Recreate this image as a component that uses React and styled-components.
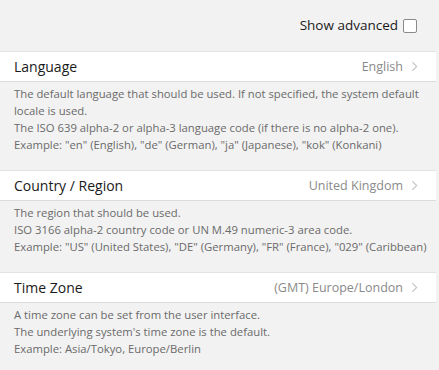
import React from 'react'
import styled, { createGlobalStyle } from 'styled-components'

const GlobalStyle = createGlobalStyle`
  html, body {
    margin: 0;
    padding: 0;
    background: #f2f2f2;
  }
  body {
    font-family: "Open Sans", "Noto Sans", sans-serif;
  }
`

const settings = [
  {
    title: 'Language',
    value: 'English',
    lines: [
      'The default language that should be used. If not specified, the system default locale is used.',
      'The ISO 639 alpha-2 or alpha-3 language code (if there is no alpha-2 one).',
      'Example: "en" (English), "de" (German), "ja" (Japanese), "kok" (Konkani)',
    ],
  },
  {
    title: 'Country / Region',
    value: 'United Kingdom',
    lines: [
      'The region that should be used.',
      'ISO 3166 alpha-2 country code or UN M.49 numeric-3 area code.',
      'Example: "US" (United States), "DE" (Germany), "FR" (France), "029" (Caribbean)',
    ],
  },
  {
    title: 'Time Zone',
    value: '(GMT) Europe/London',
    lines: [
      'A time zone can be set from the user interface.',
      "The underlying system's time zone is the default.",
      'Example: Asia/Tokyo, Europe/Berlin',
    ],
  },
]

const Page = () => {
  return (
    <Container>
      <GlobalStyle />
      <TopBar>
        <label>
          Show advanced
          <Check />
        </label>
      </TopBar>

      {settings.map((item) => (
        <Section key={item.title}>
          <Row>
            <span className='row-title'>{item.title}</span>
            <span className='row-value'>
              {item.value}
              <Chevron viewBox='0 0 8 12'>
                <path d='M1.5 1 L6.5 6 L1.5 11' />
              </Chevron>
            </span>
          </Row>
          <Desc>
            {item.lines.map((line, i) => (
              <p key={i}>{line}</p>
            ))}
          </Desc>
        </Section>
      ))}
    </Container>
  )
}

const Container = styled.div`
  width: 436px;
  min-height: 370px;
  background: #f2f2f2;
  color: #222;
`

const TopBar = styled.div`
  display: flex;
  justify-content: flex-end;
  align-items: flex-start;
  padding: 16px 19px 0 0;
  height: 35px;

  label{
    display: flex;
    align-items: center;
    font-size: 13.5px;
    line-height: 19px;
    color: #1a1a1a;
    gap: 5px;
  }
`

const Check = styled.span`
  display: inline-block;
  width: 12px;
  height: 12px;
  border: 1px solid #8a8a8a;
  border-radius: 2px;
  background: #fff;
`

const Section = styled.div`
  margin-bottom: 17px;
`

const Row = styled.div`
  display: flex;
  justify-content: space-between;
  align-items: center;
  height: 29px;
  padding: 0 18px 0 14px;
  background: #fff;
  border-top: 1px solid #e2e2e2;
  border-bottom: 1px solid #dcdcdc;

  .row-title{
    font-size: 14px;
    color: #1a1a1a;
  }

  .row-value{
    display: flex;
    align-items: center;
    gap: 8px;
    font-size: 12.5px;
    color: #8a8a8a;
  }
`

const Chevron = styled.svg`
  width: 7px;
  height: 11px;
  fill: none;
  stroke: #c4c4c4;
  stroke-width: 1.3;
`

const Desc = styled.div`
  padding: 3px 0 0 14px;

  p{
    margin: 0;
    font-size: 11.3px;
    line-height: 17px;
    color: #6a6a6a;
  }
`

export default function App() {
  return <Page />
}
